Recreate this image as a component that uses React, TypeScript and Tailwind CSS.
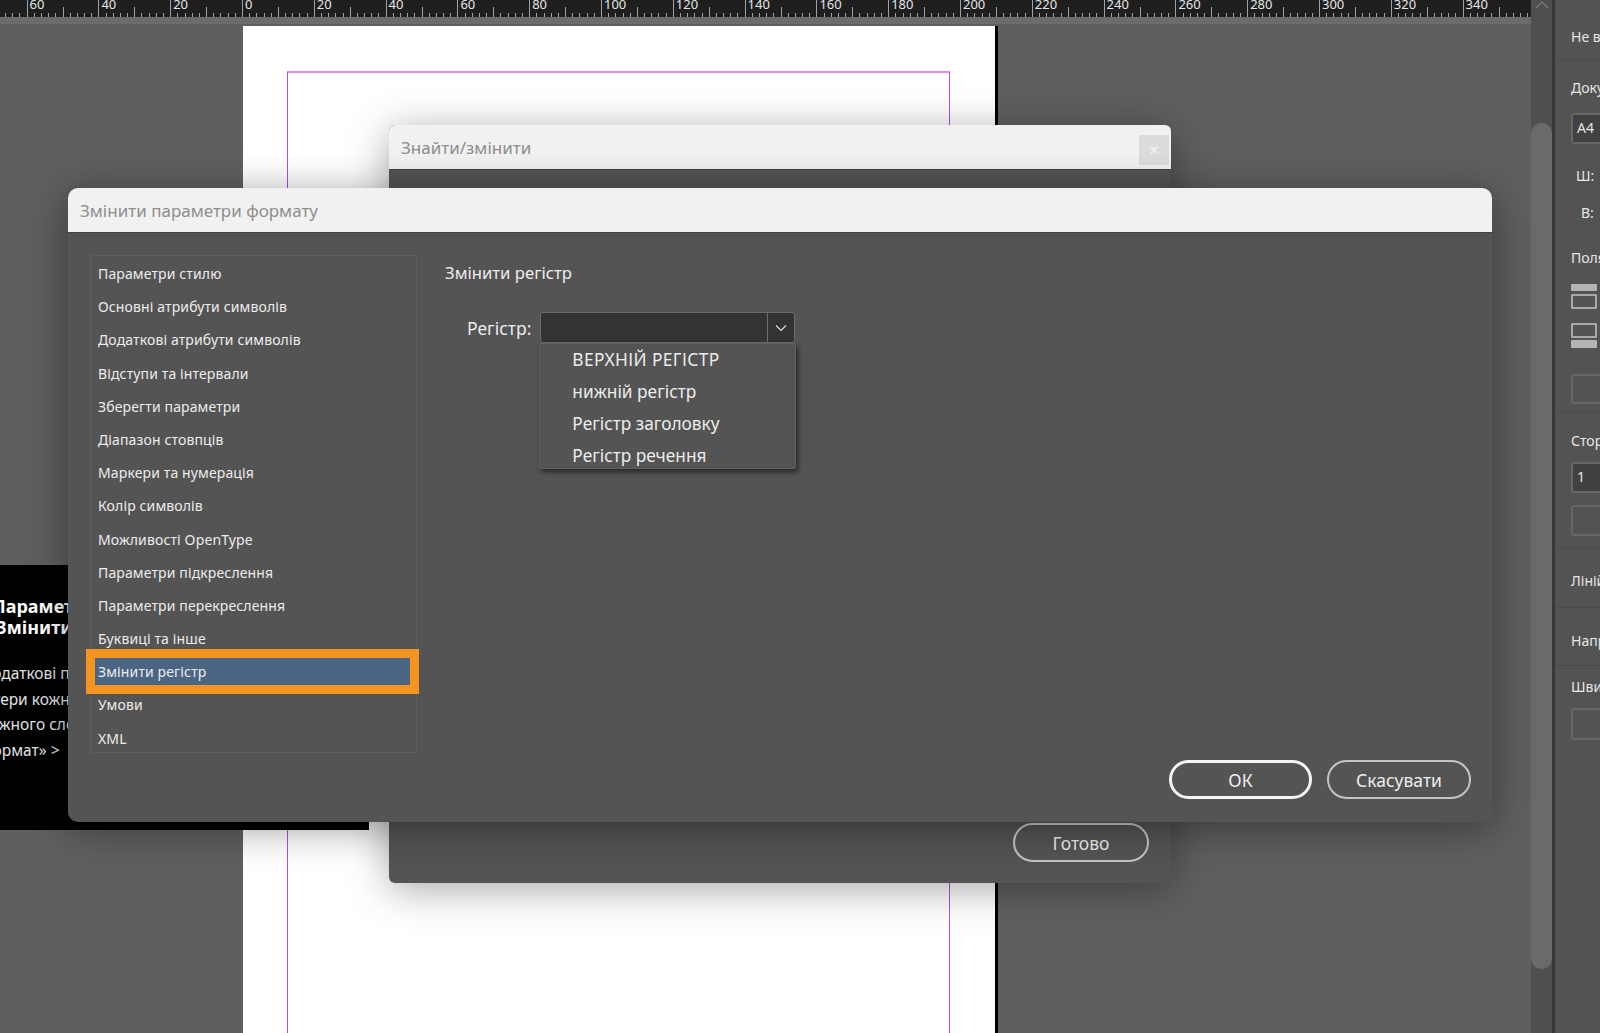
const listItems = [
  "Параметри стилю",
  "Основні атрибути символів",
  "Додаткові атрибути символів",
  "Відступи та інтервали",
  "Зберегти параметри",
  "Діапазон стовпців",
  "Маркери та нумерація",
  "Колір символів",
  "Можливості OpenType",
  "Параметри підкреслення",
  "Параметри перекреслення",
  "Буквиці та інше",
  "Змінити регістр",
  "Умови",
  "XML",
];

const caseOptions = ["ВЕРХНІЙ РЕГІСТР", "нижній регістр", "Регістр заголовку", "Регістр речення"];

const Ruler = () => {
  const zero = 242;
  const step = 3.59;
  const ticks: number[] = [];
  for (let u = -66; u <= 358; u += 2) ticks.push(u);

  return (
    <svg width="1531" height="17" className="block">
      <rect width="1531" height="17" fill="#1f1f1f" />
      {ticks.map((u) => {
        const x = Math.round(zero + u * step) + 0.5;
        const top = u % 20 === 0 ? 0 : u % 10 === 0 ? 7 : 13;
        return <line key={u} x1={x} x2={x} y1={top} y2={17} stroke="#a0a0a0" strokeWidth="1" />;
      })}
      {ticks
        .filter((u) => u % 20 === 0)
        .map((u) => (
          <text key={u} x={zero + u * step + 3} y={9} fontSize="13" fill="#e4e4e4" fontFamily="'Noto Sans', sans-serif">
            {Math.abs(u)}
          </text>
        ))}
    </svg>
  );
};

const SidePanel = () => (
  <aside className="w-[45px] flex flex-col overflow-hidden bg-[#535353] text-[14px] leading-[20px] text-[#e6e6e6] whitespace-nowrap">
    <div className="h-[61px] border-b border-[#4a4a4a] pl-[16px] pt-[27px]">Не вибрано</div>
    <div className="pl-[16px] pt-[17px] h-[352px] border-b border-[#4a4a4a]">
      <div>Документ</div>
      <div className="mt-[15px] h-[31px] w-[60px] rounded-[3px] border-2 border-[#666] bg-[#414141] pl-[4px] pt-[3px]">A4</div>
      <div className="mt-[22px] pl-[5px]">Ш:</div>
      <div className="mt-[17px] pl-[10px]">В:</div>
      <div className="mt-[25px]">Поля</div>
      <div className="mt-[16px] w-[26px]">
        <div className="h-[7px] rounded-[1px] bg-[#b4b4b4]" />
        <div className="mt-[3px] h-[15px] rounded-[1px] border-2 border-[#a8a8a8]" />
        <div className="mt-[14px] h-[15px] rounded-[1px] border-2 border-[#a8a8a8]" />
        <div className="mt-[2px] h-[8px] rounded-[1px] bg-[#b4b4b4]" />
      </div>
      <div className="mt-[26px] h-[30px] w-[60px] rounded-[3px] border-2 border-[#666]" />
    </div>
    <div className="pl-[16px] pt-[18px] h-[135px] border-b border-[#4a4a4a]">
      <div>Сторінки</div>
      <div className="mt-[11px] h-[31px] w-[60px] rounded-[3px] border-2 border-[#666] bg-[#414141] pl-[4px] pt-[3px]">1</div>
      <div className="mt-[12px] h-[31px] w-[60px] rounded-[3px] border-2 border-[#666]" />
    </div>
    <div className="h-[60px] border-b border-[#4a4a4a] pl-[16px] pt-[23px]">Лінійка</div>
    <div className="h-[58px] border-b border-[#4a4a4a] pl-[16px] pt-[23px]">Напрямок</div>
    <div className="pl-[16px] pt-[11px]">
      <div>Швидкі дії</div>
      <div className="mt-[11px] h-[32px] w-[60px] rounded-[3px] border-2 border-[#666]" />
    </div>
  </aside>
);

const DialogButton = ({ label, primary, className }: { label: string; primary?: boolean; className?: string }) => (
  <button
    className={
      primary
        ? `h-[39px] rounded-[20px] border-[3px] border-[#f4f4f4] pt-[1px] text-[17.5px] text-[#f0f0f0] ${className}`
        : `h-[39px] rounded-[20px] border-2 border-[#c4c4c4] pt-[1px] text-[17.5px] text-[#ececec] ${className}`
    }
  >
    {label}
  </button>
);

const App = () => {
  return (
    <div className="flex h-[1033px] w-[1600px] overflow-hidden bg-[#5f5f5f] font-['Noto_Sans',sans-serif]">
      <main className="flex w-[1531px] flex-col">
        <Ruler />
        <div className="relative flex-1 overflow-hidden bg-[#5f5f5f]">
          <div className="h-[7px] bg-[#6b6b6b]" />

          {/* Сторінка документа */}
          <div className="absolute left-[243px] top-[9px] h-[1100px] w-[752px] border-r-[3px] border-black bg-white box-content">
            <div className="ml-[44px] mt-[45px] h-[1100px] w-[663px] border-x border-t-2 border-x-[#b04fdc] border-t-[#e88ae8]" />
          </div>

          {/* Чорна підказка */}
          <div className="absolute left-0 top-[548px] h-[265px] w-[369px] overflow-hidden bg-black text-white">
            <div className="-ml-[8px] mt-[31px] text-[18px] font-bold leading-[21px]">Параметри</div>
            <div className="-ml-[4px] text-[18px] font-bold leading-[21px]">Змінити регістр</div>
            <div className="mt-[23px] text-[15.5px] leading-[25.5px] text-[#e2e2e2] whitespace-nowrap">
              <div className="-ml-[19px]">Додаткові параметри</div>
              <div className="-ml-[20px]">літери кожного</div>
              <div className="-ml-[18px]">кожного слова</div>
              <div className="-ml-[28px]">«Формат» &gt;</div>
            </div>
          </div>

          {/* Вікно Знайти/змінити */}
          <section className="absolute left-[389px] top-[108px] flex h-[758px] w-[782px] flex-col rounded-[6px] bg-[#545454] shadow-[0_6px_40px_rgba(0,0,0,0.35)]">
            <header className="flex h-[45px] items-center justify-between rounded-t-[6px] border-b border-[#3f3f3f] bg-[#f1f1f1] pl-[12px] pr-[2px] pt-[2px] text-[17px] text-[#8e8e8e]">
              <span>Знайти/змінити</span>
              <span className="mt-[3px] flex h-[30px] w-[30px] items-center justify-center bg-[#dcdcdc] text-[16px] text-[#f6f6f6]">×</span>
            </header>
            <div className="flex flex-1 items-end justify-end pb-[21px] pr-[22px]">
              <DialogButton label="Готово" className="w-[136px]" />
            </div>
          </section>

          {/* Вікно Змінити параметри формату */}
          <section className="absolute left-[68px] top-[171px] flex h-[634px] w-[1424px] flex-col rounded-[10px] bg-[#545454] shadow-[0_6px_40px_rgba(0,0,0,0.4)]">
            <header className="flex h-[45px] items-center rounded-t-[10px] border-b border-[#444] bg-[#f1f1f1] pl-[12px] pt-[1px] text-[17px] text-[#8e8e8e]">
              Змінити параметри формату
            </header>
            <div className="flex flex-1 pl-[22px] pt-[22px]">
              <ul className="h-[498px] w-[327px] rounded-[2px] border border-[#5e5e5e] pt-[1px] text-[14px] tracking-[0.13px] text-[#ececec]">
                {listItems.map((item) =>
                  item === "Змінити регістр" ? (
                    <li key={item} className="relative h-[33.2px] leading-[33.2px]">
                      <span className="absolute -left-[5px] -top-[6px] -right-[3px] h-[45px] border-[9px] border-[#f39520] bg-[#4b6584]" />
                      <span className="relative pl-[7px]">{item}</span>
                    </li>
                  ) : (
                    <li key={item} className="h-[33.2px] pl-[7px] leading-[33.2px]">
                      {item}
                    </li>
                  ),
                )}
              </ul>

              <div className="flex flex-1 flex-col pl-[28px]">
                <h2 className="mt-[5px] text-[16.7px] leading-[26px] font-normal text-[#ececec]">Змінити регістр</h2>
                <div className="mt-[26px] flex items-start pl-[22px]">
                  <label className="mt-[3px] text-[17.5px] leading-[26px] text-[#ececec]">Регістр:</label>
                  <div className="relative ml-[9px]">
                    <div className="flex h-[31px] w-[255px] rounded-[3px] border border-[#6c6c6c] bg-[#333333]">
                      <div className="flex-1" />
                      <div className="flex w-[27px] items-center justify-center border-l border-[#6c6c6c]">
                        <svg width="12" height="8" viewBox="0 0 12 8" fill="none" stroke="#dddddd" strokeWidth="1.2">
                          <path d="M1 1.5 L6 6.5 L11 1.5" />
                        </svg>
                      </div>
                    </div>
                    <ul className="absolute -left-[1px] top-[31px] h-[126px] w-[257px] rounded-[2px] border border-[#606060] bg-[#545454] pl-[32px] text-[17.3px] leading-[32px] text-[#ececec] shadow-[2px_3px_5px_rgba(0,0,0,0.55)]">
                      {caseOptions.map((o) => (
                        <li key={o} className="first:-mt-[0.4px] first:tracking-[0.4px]">{o}</li>
                      ))}
                    </ul>
                  </div>
                </div>
              </div>
            </div>
            <footer className="flex justify-end gap-[15px] pb-[23px] pr-[21px]">
              <DialogButton label="ОК" primary className="w-[143px]" />
              <DialogButton label="Скасувати" className="w-[144px]" />
            </footer>
          </section>
        </div>
      </main>

      {/* Смуга прокрутки */}
      <div className="flex w-[21px] flex-col bg-[#4f4f4f]">
        <div className="flex h-[123px] justify-center pt-[1px]">
          <svg width="14" height="8" viewBox="0 0 14 8" fill="none" stroke="#7d7d7d" strokeWidth="1.2">
            <path d="M1 7 L7 1 L13 7" />
          </svg>
        </div>
        <div className="h-[846px] rounded-[10px] bg-[#6a6a6a]" />
      </div>
      <div className="w-[3px] bg-[#383838]" />
      <SidePanel />
    </div>
  );
};

export default App;
